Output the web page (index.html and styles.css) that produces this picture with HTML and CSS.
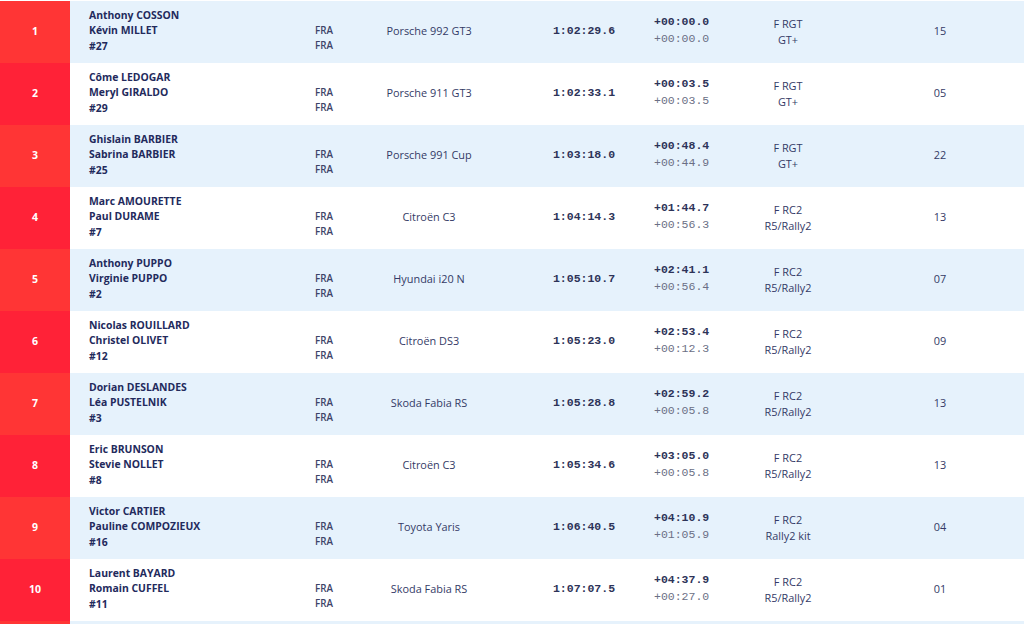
FILE: index.html
```html
<!DOCTYPE html>
<html lang="fr">
<head>
<meta charset="utf-8">
<title>Classement</title>
<link rel="stylesheet" href="styles.css">
</head>
<body>
<div class="results">
  <div class="row odd">
    <div class="pos">1</div>
    <div class="crew"><span>Anthony COSSON</span><span>Kévin MILLET</span><span>#27</span></div>
    <div class="nat"><span>FRA</span><span>FRA</span></div>
    <div class="car">Porsche 992 GT3</div>
    <div class="time">1:02:29.6</div>
    <div class="gap"><span class="g1">+00:00.0</span><span class="g2">+00:00.0</span></div>
    <div class="cls"><span>F RGT</span><span>GT+</span></div>
    <div class="num">15</div>
  </div>
  <div class="row even">
    <div class="pos">2</div>
    <div class="crew"><span>Côme LEDOGAR</span><span>Meryl GIRALDO</span><span>#29</span></div>
    <div class="nat"><span>FRA</span><span>FRA</span></div>
    <div class="car">Porsche 911 GT3</div>
    <div class="time">1:02:33.1</div>
    <div class="gap"><span class="g1">+00:03.5</span><span class="g2">+00:03.5</span></div>
    <div class="cls"><span>F RGT</span><span>GT+</span></div>
    <div class="num">05</div>
  </div>
  <div class="row odd">
    <div class="pos">3</div>
    <div class="crew"><span>Ghislain BARBIER</span><span>Sabrina BARBIER</span><span>#25</span></div>
    <div class="nat"><span>FRA</span><span>FRA</span></div>
    <div class="car">Porsche 991 Cup</div>
    <div class="time">1:03:18.0</div>
    <div class="gap"><span class="g1">+00:48.4</span><span class="g2">+00:44.9</span></div>
    <div class="cls"><span>F RGT</span><span>GT+</span></div>
    <div class="num">22</div>
  </div>
  <div class="row even">
    <div class="pos">4</div>
    <div class="crew"><span>Marc AMOURETTE</span><span>Paul DURAME</span><span>#7</span></div>
    <div class="nat"><span>FRA</span><span>FRA</span></div>
    <div class="car">Citroën C3</div>
    <div class="time">1:04:14.3</div>
    <div class="gap"><span class="g1">+01:44.7</span><span class="g2">+00:56.3</span></div>
    <div class="cls"><span>F RC2</span><span>R5/Rally2</span></div>
    <div class="num">13</div>
  </div>
  <div class="row odd">
    <div class="pos">5</div>
    <div class="crew"><span>Anthony PUPPO</span><span>Virginie PUPPO</span><span>#2</span></div>
    <div class="nat"><span>FRA</span><span>FRA</span></div>
    <div class="car">Hyundai i20 N</div>
    <div class="time">1:05:10.7</div>
    <div class="gap"><span class="g1">+02:41.1</span><span class="g2">+00:56.4</span></div>
    <div class="cls"><span>F RC2</span><span>R5/Rally2</span></div>
    <div class="num">07</div>
  </div>
  <div class="row even">
    <div class="pos">6</div>
    <div class="crew"><span>Nicolas ROUILLARD</span><span>Christel OLIVET</span><span>#12</span></div>
    <div class="nat"><span>FRA</span><span>FRA</span></div>
    <div class="car">Citroën DS3</div>
    <div class="time">1:05:23.0</div>
    <div class="gap"><span class="g1">+02:53.4</span><span class="g2">+00:12.3</span></div>
    <div class="cls"><span>F RC2</span><span>R5/Rally2</span></div>
    <div class="num">09</div>
  </div>
  <div class="row odd">
    <div class="pos">7</div>
    <div class="crew"><span>Dorian DESLANDES</span><span>Léa PUSTELNIK</span><span>#3</span></div>
    <div class="nat"><span>FRA</span><span>FRA</span></div>
    <div class="car">Skoda Fabia RS</div>
    <div class="time">1:05:28.8</div>
    <div class="gap"><span class="g1">+02:59.2</span><span class="g2">+00:05.8</span></div>
    <div class="cls"><span>F RC2</span><span>R5/Rally2</span></div>
    <div class="num">13</div>
  </div>
  <div class="row even">
    <div class="pos">8</div>
    <div class="crew"><span>Eric BRUNSON</span><span>Stevie NOLLET</span><span>#8</span></div>
    <div class="nat"><span>FRA</span><span>FRA</span></div>
    <div class="car">Citroën C3</div>
    <div class="time">1:05:34.6</div>
    <div class="gap"><span class="g1">+03:05.0</span><span class="g2">+00:05.8</span></div>
    <div class="cls"><span>F RC2</span><span>R5/Rally2</span></div>
    <div class="num">13</div>
  </div>
  <div class="row odd">
    <div class="pos">9</div>
    <div class="crew"><span>Victor CARTIER</span><span>Pauline COMPOZIEUX</span><span>#16</span></div>
    <div class="nat"><span>FRA</span><span>FRA</span></div>
    <div class="car">Toyota Yaris</div>
    <div class="time">1:06:40.5</div>
    <div class="gap"><span class="g1">+04:10.9</span><span class="g2">+01:05.9</span></div>
    <div class="cls"><span>F RC2</span><span>Rally2 kit</span></div>
    <div class="num">04</div>
  </div>
  <div class="row even">
    <div class="pos">10</div>
    <div class="crew"><span>Laurent BAYARD</span><span>Romain CUFFEL</span><span>#11</span></div>
    <div class="nat"><span>FRA</span><span>FRA</span></div>
    <div class="car">Skoda Fabia RS</div>
    <div class="time">1:07:07.5</div>
    <div class="gap"><span class="g1">+04:37.9</span><span class="g2">+00:27.0</span></div>
    <div class="cls"><span>F RC2</span><span>R5/Rally2</span></div>
    <div class="num">01</div>
  </div>
  <div class="row odd">
    <div class="pos"></div>
    <div class="crew"></div>
    <div class="nat"></div>
    <div class="car"></div>
    <div class="time"></div>
    <div class="gap"></div>
    <div class="cls"></div>
    <div class="num"></div>
  </div>
</div>
</body>
</html>
```

FILE: styles.css
```css
html, body {
  margin: 0;
  padding: 0;
  background: #ffffff;
  overflow: hidden;
}

body {
  font-family: "Open Sans", "Noto Sans", sans-serif;
  color: #2a3060;
  padding-top: 1px;
}

.results {
  display: flex;
  flex-direction: column;
  width: 1024px;
}

.row {
  display: grid;
  grid-template-columns: 70px 245px 40px 148px 151px 86px 96px 188px;
  height: 62px;
  align-items: center;
}

.row.odd { background: #e6f2fc; }
.row.even { background: #ffffff; }

.pos {
  height: 100%;
  display: flex;
  align-items: center;
  justify-content: center;
  color: #ffffff;
  font-weight: 700;
  font-size: 10.5px;
  padding-bottom: 2px;
  box-sizing: border-box;
}

.odd .pos { background: #ff3535; }
.even .pos { background: #ff2237; }

.crew {
  padding-left: 19px;
  display: flex;
  flex-direction: column;
  font-weight: 700;
  font-size: 10.4px;
  line-height: 15.5px;
  color: #232a5c;
  padding-bottom: 2px;
}

.nat {
  display: flex;
  flex-direction: column;
  font-weight: 600;
  font-size: 9.8px;
  line-height: 15px;
  color: #3d4368;
  padding-top: 11px;
}

.car {
  text-align: center;
  font-weight: 500;
  font-size: 10.9px;
  color: #343a66;
  padding-bottom: 4px;
}

.time {
  text-align: center;
  padding-left: 11px;
  font-family: "Liberation Mono", "Courier New", monospace;
  font-weight: 700;
  font-size: 11.5px;
  color: #2d3358;
  padding-bottom: 4px;
}

.gap {
  display: flex;
  flex-direction: column;
  font-family: "Liberation Mono", "Courier New", monospace;
  font-size: 11.5px;
  line-height: 16.5px;
  padding-bottom: 3px;
}

.gap .g1 { font-weight: 700; color: #2d3358; }
.gap .g2 { font-weight: 400; color: #6b6f85; }

.cls {
  display: flex;
  flex-direction: column;
  align-items: center;
  font-weight: 500;
  font-size: 10.9px;
  line-height: 16px;
  color: #343a66;
  padding-bottom: 1px;
}

.num {
  text-align: center;
  padding-left: 20px;
  font-weight: 500;
  font-size: 10.9px;
  color: #343a66;
  padding-bottom: 4px;
}
```
